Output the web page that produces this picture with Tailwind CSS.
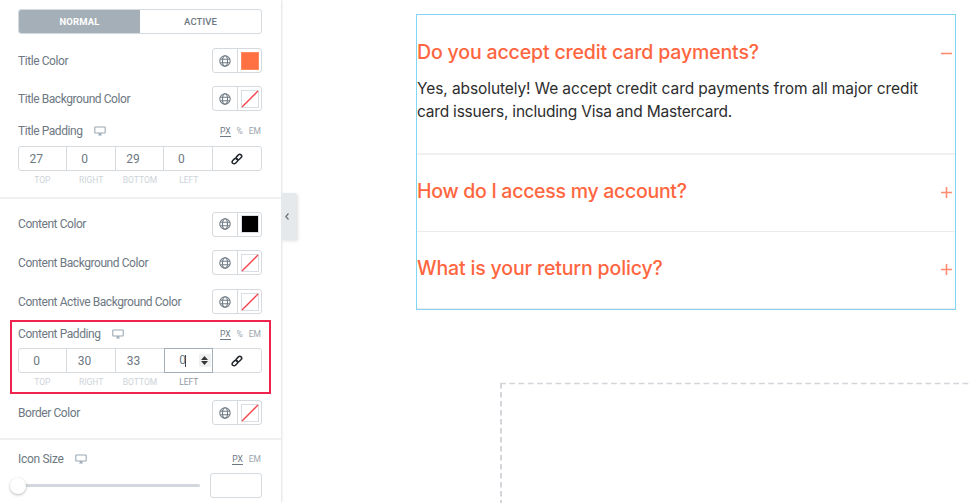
<!DOCTYPE html>
<html lang="en">

<head>
    <meta charset="UTF-8">
    <meta name="viewport" content="width=device-width, initial-scale=1.0">
    <title>Accordion Editor</title>
    <script src="https://cdn.jsdelivr.net/npm/@tailwindcss/browser@4"></script>
</head>

<body class="bg-white font-['Roboto',sans-serif]">
    <!-- Shared icons -->
    <svg class="hidden">
        <symbol id="globe" viewBox="0 0 12 12">
            <g fill="none" stroke="#727d86" stroke-width="1.1">
                <circle cx="6" cy="6" r="5.2" />
                <ellipse cx="6" cy="6" rx="2.5" ry="5.2" />
                <path d="M1.2 4.2h9.6M1.2 7.8h9.6" />
            </g>
        </symbol>
        <symbol id="desktop" viewBox="0 0 12 10">
            <path d="M1.4 1h9.2q.6 0 .6.6v4.8q0 .6-.6.6H1.4q-.6 0-.6-.6V1.6q0-.6.6-.6z" fill="none" stroke="#9aa9b5" stroke-width="1.1" />
            <path d="M4.3 7.2h3.4L7.2 8.6l.8.9H4l.8-.9z" fill="#9aa9b5" />
        </symbol>
        <symbol id="none" viewBox="0 0 18 18">
            <rect x=".5" y=".5" width="17" height="17" fill="#fff" stroke="#d8dee4" />
            <path d="M1 17L17 1" stroke="#f5424a" stroke-width="1.3" />
        </symbol>
        <symbol id="link" viewBox="0 0 12 12">
            <g fill="none" stroke="#23282d" stroke-width="1.5" transform="rotate(-45 6 6)">
                <rect x="0" y="4.1" width="6.2" height="3.8" rx="1.9" />
                <rect x="5.6" y="4.1" width="6.2" height="3.8" rx="1.9" />
            </g>
        </symbol>
    </svg>

    <div class="flex w-[969px] h-[503px] overflow-hidden">
        <aside class="relative z-10 w-[281px] shrink-0 bg-white text-[12px] text-[#6d7882] shadow-[0_0_3px_rgba(0,0,0,0.22)]">
            <section class="h-[199px] pl-[18px] pr-[19px] pt-[9px] border-b-2 border-[#eef0f2]">
                <div class="flex h-[25px] border border-[#d5dadf] rounded-[3px] overflow-hidden text-[9.5px] leading-[23px] text-center tracking-[0.1px]">
                    <div class="w-[121px] bg-[#a4afb7] text-white font-bold">NORMAL</div>
                    <div class="flex-1 font-medium">ACTIVE</div>
                </div>

                <div class="mt-[14px] flex h-[25px] items-center justify-between">
                    <span class="tracking-[-0.43px]">Title Color</span>
                    <div class="flex w-[50px] h-[25px] border border-[#d5dadf] rounded-[3px]">
                        <div class="w-[25px] border-r border-[#d5dadf] flex items-center justify-center"><svg class="size-3"><use href="#globe" /></svg></div>
                        <div class="flex-1 flex items-center justify-center"><div class="size-[18px] bg-[#ff7143] border border-[#ff8a62]"></div></div>
                    </div>
                </div>
                <div class="mt-[13px] flex h-[25px] items-center justify-between">
                    <span class="tracking-[-0.43px]">Title Background Color</span>
                    <div class="flex w-[50px] h-[25px] border border-[#d5dadf] rounded-[3px]">
                        <div class="w-[25px] border-r border-[#d5dadf] flex items-center justify-center"><svg class="size-3"><use href="#globe" /></svg></div>
                        <div class="flex-1 flex items-center justify-center"><svg class="size-[18px]"><use href="#none" /></svg></div>
                    </div>
                </div>

                <div class="mt-[12px] flex h-4 items-center">
                    <span class="tracking-[-0.43px]">Title Padding</span>
                    <svg class="ml-[11px] w-3 h-[10px]"><use href="#desktop" /></svg>
                    <div class="ml-auto mr-[1px] mt-[2px] flex gap-[6px] text-[8.5px] leading-[9px] text-[#9ba6af]">
                        <span class="border-b border-[#6d7882] text-[#6d7882]">PX</span><span>%</span><span>EM</span>
                    </div>
                </div>
                <div class="mt-[7px] grid grid-cols-5 h-[25px] border border-[#d5dadf] rounded-[3px] text-center divide-x divide-[#d5dadf]">
                    <div class="h-[23px] leading-[24px] pr-[13px]">27</div>
                    <div class="h-[23px] leading-[24px] pr-[13px]">0</div>
                    <div class="h-[23px] leading-[24px] pr-[13px]">29</div>
                    <div class="h-[23px] leading-[24px] pr-[13px]">0</div>
                    <div class="flex h-[23px] items-center justify-center"><svg class="size-3 overflow-visible"><use href="#link" /></svg></div>
                </div>
                <div class="mt-[3px] grid grid-cols-5 text-[8.5px] leading-3 text-center text-[#cdd3d9]">
                    <span>TOP</span><span>RIGHT</span><span>BOTTOM</span><span>LEFT</span>
                </div>
            </section>

            <section class="h-[241px] pl-[18px] pr-[19px] pt-[12px] border-b-2 border-[#eef0f2]">
                <div class="flex h-[26px] items-center justify-between">
                    <span class="tracking-[-0.43px]">Content Color</span>
                    <div class="flex w-[50px] h-[25px] border border-[#d5dadf] rounded-[3px]">
                        <div class="w-[25px] border-r border-[#d5dadf] flex items-center justify-center"><svg class="size-3"><use href="#globe" /></svg></div>
                        <div class="flex-1 flex items-center justify-center"><div class="size-[18px] bg-black border border-[#d8dee4]"></div></div>
                    </div>
                </div>
                <div class="mt-[13px] flex h-[25px] items-center justify-between">
                    <span class="tracking-[-0.43px]">Content Background Color</span>
                    <div class="flex w-[50px] h-[25px] border border-[#d5dadf] rounded-[3px]">
                        <div class="w-[25px] border-r border-[#d5dadf] flex items-center justify-center"><svg class="size-3"><use href="#globe" /></svg></div>
                        <div class="flex-1 flex items-center justify-center"><svg class="size-[18px]"><use href="#none" /></svg></div>
                    </div>
                </div>
                <div class="mt-[14px] flex h-[25px] items-center justify-between">
                    <span class="tracking-[-0.43px]">Content Active Background Color</span>
                    <div class="flex w-[50px] h-[25px] border border-[#d5dadf] rounded-[3px]">
                        <div class="w-[25px] border-r border-[#d5dadf] flex items-center justify-center"><svg class="size-3"><use href="#globe" /></svg></div>
                        <div class="flex-1 flex items-center justify-center"><svg class="size-[18px]"><use href="#none" /></svg></div>
                    </div>
                </div>

                <!-- Highlighted control -->
                <div class="-ml-[8px] -mr-[9px] mt-[6px] h-[74px] border-2 border-[#f0234f] pl-[6px] pr-[7px] pt-[4px]">
                    <div class="flex h-4 items-center">
                        <span class="tracking-[-0.43px]">Content Padding</span>
                        <svg class="ml-[11px] w-3 h-[10px]"><use href="#desktop" /></svg>
                        <div class="ml-auto mr-[1px] mt-[2px] flex gap-[6px] text-[8.5px] leading-[9px] text-[#9ba6af]">
                            <span class="border-b border-[#6d7882] text-[#6d7882]">PX</span><span>%</span><span>EM</span>
                        </div>
                    </div>
                    <div class="mt-[6px] grid grid-cols-5 h-[25px] border border-[#d5dadf] rounded-[3px] text-center">
                        <div class="h-[23px] leading-[25px] pr-[12px] border-r border-[#d5dadf]">0</div>
                        <div class="h-[23px] leading-[25px] pr-[13px] border-r border-[#d5dadf]">30</div>
                        <div class="h-[23px] leading-[25px] pr-[13px]">33</div>
                        <div class="-my-px flex h-[25px] items-center border border-[#a4afb7] pl-[14px]">
                            <span class="leading-[25px]">0</span>
                            <span class="-ml-px w-px h-3 bg-[#444]"></span>
                            <div class="ml-auto mr-px flex w-[12px] h-[13px] items-center justify-center bg-[#f0f0f0]">
                                <svg class="w-[7px] h-[9px]" viewBox="0 0 7 9" fill="#353535"><path d="M0 4L3.5 0 7 4zM0 5L3.5 9 7 5z" /></svg>
                            </div>
                        </div>
                        <div class="flex h-[23px] items-center justify-center"><svg class="size-3 overflow-visible"><use href="#link" /></svg></div>
                    </div>
                    <div class="mt-[3px] grid grid-cols-5 text-[8.5px] leading-3 text-center text-[#cdd3d9]">
                        <span>TOP</span><span>RIGHT</span><span>BOTTOM</span><span class="text-[#8d989f]">LEFT</span>
                    </div>
                </div>

                <div class="mt-[6px] flex h-[25px] items-center justify-between">
                    <span class="tracking-[-0.43px]">Border Color</span>
                    <div class="flex w-[50px] h-[25px] border border-[#d5dadf] rounded-[3px]">
                        <div class="w-[25px] border-r border-[#d5dadf] flex items-center justify-center"><svg class="size-3"><use href="#globe" /></svg></div>
                        <div class="flex-1 flex items-center justify-center"><svg class="size-[18px]"><use href="#none" /></svg></div>
                    </div>
                </div>
            </section>

            <section class="pl-[18px] pr-[19px] pt-[11px]">
                <div class="flex h-4 items-center">
                    <span class="tracking-[-0.3px]">Icon Size</span>
                    <svg class="ml-[11px] w-3 h-[10px]"><use href="#desktop" /></svg>
                    <div class="ml-auto mr-[1px] mt-[2px] flex gap-[6px] text-[8.5px] leading-[9px] text-[#9ba6af]">
                        <span class="border-b border-[#6d7882] text-[#6d7882]">PX</span><span>EM</span>
                    </div>
                </div>
                <div class="mt-[6px] -ml-2 flex h-[25px] items-center">
                    <div class="z-10 size-4 rounded-full bg-white shadow-[0_1px_3px_rgba(0,0,0,0.28)]"></div>
                    <div class="-ml-1 h-[3px] w-[178px] rounded-full bg-[#d2d8dd]"></div>
                    <div class="ml-auto w-[52px] h-[25px] border border-[#d5dadf] rounded-[3px]"></div>
                </div>
            </section>

            <!-- Panel collapse handle -->
            <div class="absolute left-[281px] top-[193px] flex w-[15px] h-[47px] items-center justify-center bg-[#e6e9ec] shadow-[2px_1px_3px_rgba(0,0,0,0.12)]">
                <svg class="mr-[3px] w-1 h-[7px]" viewBox="0 0 4 7"><path d="M3.5 .5L.8 3.5l2.7 3" fill="none" stroke="#66717a" stroke-width="1.2" /></svg>
            </div>
        </aside>

        <main class="flex-1 pl-[135px] pt-[14px] font-['Inter',sans-serif]">
            <div class="w-[540px] h-[296px] border border-[#82d6f2]">
                <div class="h-[140px] border-b-2 border-[#f0f0f0] pt-[24px]">
                    <div class="flex items-center justify-between text-[19.5px] leading-[26px] text-[#ff6640]">
                        <h3 class="font-medium tracking-[-0.15px] whitespace-nowrap">Do you accept credit card payments?</h3>
                        <svg class="mt-[3px] mr-[3px] w-[11px] h-[11px]" viewBox="0 0 11 11"><path d="M0 5.5h11" stroke="#ff8b70" stroke-width="1.6" /></svg>
                    </div>
                    <p class="mt-[12px] text-[15.5px] leading-[23px] tracking-[-0.09px] text-[#2d2d2d] whitespace-nowrap">Yes, absolutely! We accept credit card payments from all major credit<br><span class="tracking-[-0.21px]">card issuers, including Visa and Mastercard.</span></p>
                </div>
                <div class="flex h-[77px] items-center justify-between border-b border-[#ebebeb] text-[19.5px] text-[#ff6640]">
                    <h3 class="-mt-[3px] font-medium tracking-[-0.28px]">How do I access my account?</h3>
                    <svg class="-mt-px mr-[3px] w-[11px] h-[11px]" viewBox="0 0 11 11"><path d="M0 5.5h11M5.5 0v11" stroke="#ff8b70" stroke-width="1.6" /></svg>
                </div>
                <div class="flex h-[77px] items-center justify-between border-b border-[#ebebeb] text-[19.5px] text-[#ff6640]">
                    <h3 class="-mt-[3px] font-medium tracking-[-0.15px]">What is your return policy?</h3>
                    <svg class="-mt-px mr-[3px] w-[11px] h-[11px]" viewBox="0 0 11 11"><path d="M0 5.5h11M5.5 0v11" stroke="#ff8b70" stroke-width="1.6" /></svg>
                </div>
            </div>

            <!-- Empty drop area -->
            <svg class="ml-[84px] mt-[72px] w-[469px] h-[121px]" fill="none" stroke="#d2d6da">
                <path d="M0 1.5h469" stroke-width="1.6" stroke-dasharray="5.8 3.45" />
                <path d="M1 1v120" stroke-width="2" stroke-dasharray="5.4 3.6" />
            </svg>
        </main>
    </div>
</body>

</html>
